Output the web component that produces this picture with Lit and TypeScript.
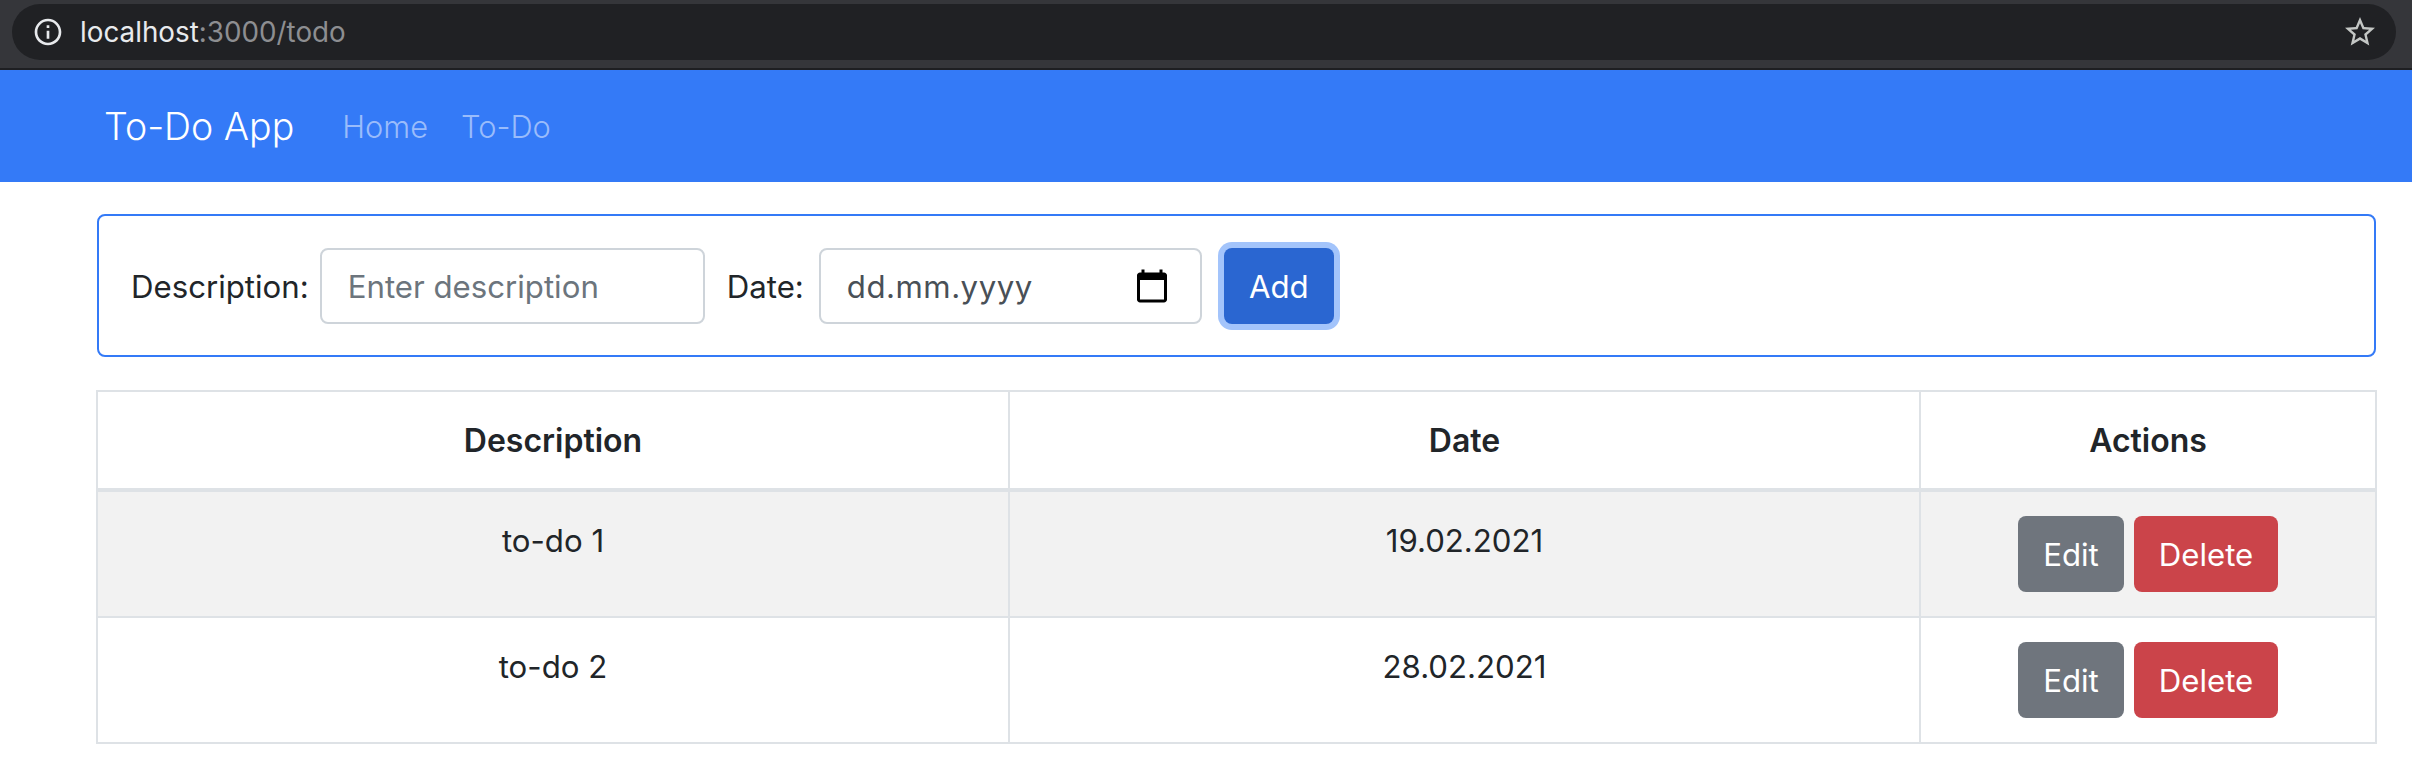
import { css, html, LitElement } from "lit";
import { customElement } from "lit/decorators.js";

const todos = [
  { description: "to-do 1", date: "19.02.2021" },
  { description: "to-do 2", date: "28.02.2021" },
];

@customElement("app-root")
export class AppRoot extends LitElement {
  static styles = css`
    :host {
      display: block;
      background: #fff;
      font-family: Inter, "Liberation Sans", sans-serif;
      font-size: 31.2px;
      font-weight: 375;
      line-height: 48px;
      color: #212529;
    }
    * {
      box-sizing: border-box;
    }
    .chrome {
      height: 70px;
      padding: 4px 16px 10px 12px;
      background: #35363a;
      border-bottom: 2px solid #1e1f22;
    }
    .omnibox {
      display: flex;
      align-items: center;
      height: 56px;
      padding: 0 18px 0 20px;
      border-radius: 28px;
      background: #202124;
      font-size: 27.8px;
      font-weight: 400;
      line-height: 32px;
      color: #e8eaed;
    }
    .omnibox svg {
      flex: none;
      fill: #e8eaed;
    }
    .omnibox svg.star {
      fill: #c4c7c5;
    }
    .url {
      flex: 1;
      margin-left: 16px;
    }
    .url span {
      color: #8d8e91;
    }
    .navbar {
      display: flex;
      align-items: center;
      height: 112px;
      padding: 2px 104px 0;
      background: #347af7;
      color: #fff;
    }
    .brand {
      margin-right: 48px;
      font-size: 37.5px;
      font-weight: 300;
    }
    .navbar a {
      margin-right: 33px;
      font-size: 30.8px;
      font-weight: 300;
      color: #9abcfb;
    }
    main {
      padding: 32px 36px 0 97px;
    }
    .card {
      display: flex;
      align-items: center;
      padding: 32px 32px 31px;
      border: 2px solid #347af7;
      border-radius: 8px;
    }
    label {
      padding-top: 2px;
    }
    .field {
      display: flex;
      align-items: center;
      height: 76px;
      padding: 2px 26px 0;
      border: 2px solid #ced4da;
      border-radius: 8px;
      background: #fff;
      font: inherit;
    }
    input.field {
      width: 385px;
      margin: 0 22px 0 11px;
      outline: none;
    }
    input.field::placeholder {
      color: #6c757d;
    }
    .date {
      justify-content: space-between;
      width: 383px;
      margin: 0 22px 0 15px;
      padding: 2px 30px 0 26px;
      color: #495057;
      letter-spacing: 0.5px;
    }
    .date svg {
      margin-top: -2px;
    }
    button {
      height: 76px;
      padding: 2px 0 0;
      border: 0;
      border-radius: 8px;
      font: inherit;
      color: #fff;
    }
    .add {
      width: 110px;
      background: #2a66d1;
      box-shadow: 0 0 0 6px #a3c4fb;
    }
    .edit {
      width: 106px;
      margin-right: 10px;
      background: #6f757d;
    }
    .delete {
      width: 144px;
      background: #cb444a;
    }
    table {
      width: 2279px;
      margin: 33px 0 0 -1px;
      border-collapse: collapse;
      table-layout: fixed;
      text-align: center;
    }
    .col-wide {
      width: 912px;
    }
    .col-mid {
      width: 911px;
    }
    .col-actions {
      width: 456px;
    }
    th,
    td {
      padding: 24px;
      border: 2px solid #dee2e6;
      vertical-align: top;
    }
    th {
      padding: 25px 24px 23px;
      border-bottom-width: 4px;
      font-size: 32px;
      font-weight: 600;
    }
    td {
      line-height: 50px;
    }
    tbody tr:nth-child(odd) {
      background: #f2f2f2;
    }
    .actions {
      display: flex;
      justify-content: center;
    }
  `;

  render() {
    return html`
      <div class="chrome">
        <div class="omnibox">
          <svg width="32" height="32" viewBox="0 0 24 24">
            <path
              d="M11 7h2v2h-2zm0 4h2v6h-2zm1-9C6.48 2 2 6.48 2 12s4.48 10 10 10 10-4.48 10-10S17.52 2 12 2zm0 18c-4.41 0-8-3.59-8-8s3.59-8 8-8 8 3.59 8 8-3.59 8-8 8z"
            />
          </svg>
          <div class="url">localhost<span>:3000/todo</span></div>
          <svg class="star" width="36" height="36" viewBox="0 0 24 24">
            <path
              d="M22 9.24l-7.19-.62L12 2 9.19 8.63 2 9.24l5.46 4.73L5.82 21 12 17.27 18.18 21l-1.63-7.03L22 9.24zM12 15.4l-3.76 2.27 1-4.28-3.32-2.88 4.38-.38L12 6.1l1.71 4.04 4.38.38-3.32 2.88 1 4.28L12 15.4z"
            />
          </svg>
        </div>
      </div>
      <nav class="navbar">
        <span class="brand">To-Do App</span>
        <a>Home</a>
        <a>To-Do</a>
      </nav>
      <main>
        <div class="card">
          <label>Description:</label>
          <input class="field" placeholder="Enter description" />
          <label>Date:</label>
          <div class="field date">
            dd.mm.yyyy
            <svg width="36" height="36" viewBox="0 0 24 24">
              <path
                d="M20 3h-1V1h-2v2H7V1H5v2H4c-1.1 0-2 .9-2 2v16c0 1.1.9 2 2 2h16c1.1 0 2-.9 2-2V5c0-1.1-.9-2-2-2zm0 18H4V8h16v13z"
              />
            </svg>
          </div>
          <button class="add">Add</button>
        </div>
        <table>
          <colgroup>
            <col class="col-wide" />
            <col class="col-mid" />
            <col class="col-actions" />
          </colgroup>
          <thead>
            <tr>
              <th>Description</th>
              <th>Date</th>
              <th>Actions</th>
            </tr>
          </thead>
          <tbody>
            ${todos.map(
              (todo) => html`
                <tr>
                  <td>${todo.description}</td>
                  <td>${todo.date}</td>
                  <td>
                    <div class="actions">
                      <button class="edit">Edit</button>
                      <button class="delete">Delete</button>
                    </div>
                  </td>
                </tr>
              `,
            )}
          </tbody>
        </table>
      </main>
    `;
  }
}
